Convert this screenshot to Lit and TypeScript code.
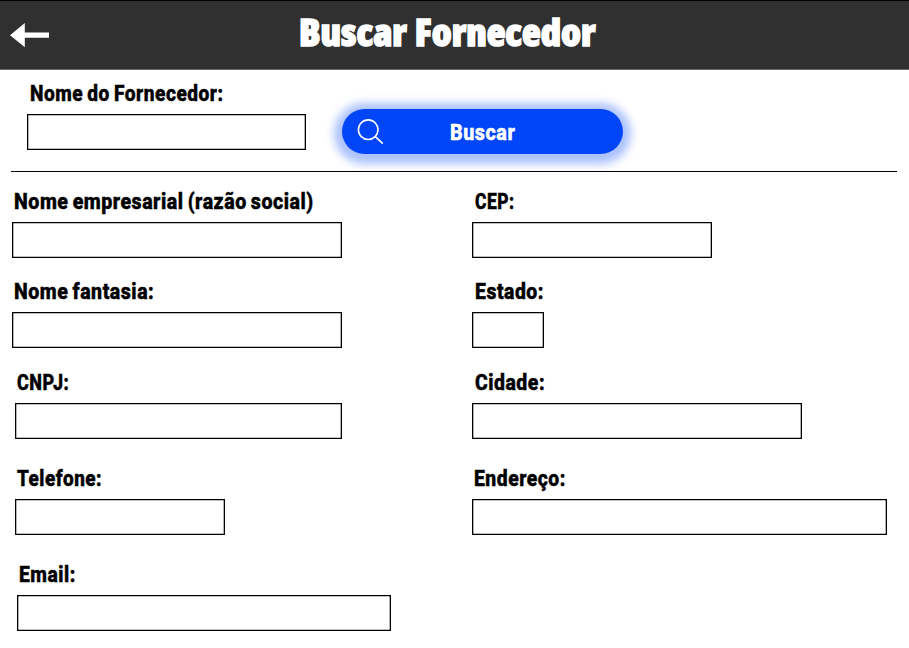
import { LitElement, html, css } from "lit";
import { customElement, property } from "lit/decorators.js";

/** One line of text, condensed horizontally to a given width. */
@customElement("fit-text")
class FitText extends LitElement {
  @property({ type: Number }) width = 100;
  @property() text = "";

  static styles = css`
    :host { display: block; white-space: nowrap; }
    .line { display: inline-block; transform-origin: 0 50%; }
  `;

  render() {
    return html`<span class="line">${this.text}</span>`;
  }

  updated() {
    const line = this.renderRoot.querySelector(".line") as HTMLElement;
    this.style.width = `${this.width}px`;
    line.style.transform = `scaleX(${this.width / line.offsetWidth})`;
  }
}

@customElement("form-field")
class FormField extends LitElement {
  @property() label = "";
  @property({ type: Number }) labelWidth = 100;
  @property({ type: Number }) indent = 2;
  @property({ type: Number }) boxWidth = 100;

  static styles = css`
    :host { display: block; }
    .field { display: flex; flex-direction: column; gap: 9px; }
    .label {
      height: 24px; line-height: 24px; font-size: 22.5px; font-weight: 800; color: #000;
      letter-spacing: 0.6px; word-spacing: -1.4px; -webkit-text-stroke: 0.5px #000;
    }
    .box {
      box-sizing: border-box; height: 36px; margin: 0; padding: 0 8px;
      border: 1px solid #000; border-radius: 0; background: #fff; outline: none;
      box-shadow: inset 0 0 0 0.3px #000; font: 500 18px Roboto, sans-serif;
    }
  `;

  render() {
    return html`<label class="field">
      <fit-text class="label" .text=${this.label} .width=${this.labelWidth}
        style="margin-left:${this.indent}px"></fit-text>
      <input class="box" style="width:${this.boxWidth}px" />
    </label>`;
  }
}

type Field = { label: string; labelWidth: number; indent: number; boxWidth: number; start: number };

const company: Field[] = [
  { label: "Nome empresarial (razão social)", labelWidth: 299.5, indent: 2.4, boxWidth: 330, start: 12 },
  { label: "Nome fantasia:", labelWidth: 140, indent: 2.4, boxWidth: 330, start: 12 },
  { label: "CNPJ:", labelWidth: 52, indent: 2.2, boxWidth: 327, start: 14.5 },
  { label: "Telefone:", labelWidth: 85, indent: 2, boxWidth: 210, start: 14.5 },
  { label: "Email:", labelWidth: 56.5, indent: 2.4, boxWidth: 374, start: 17 },
];

const address: Field[] = [
  { label: "CEP:", labelWidth: 39.5, indent: 3.2, boxWidth: 240, start: 472 },
  { label: "Estado:", labelWidth: 69, indent: 3, boxWidth: 72, start: 472 },
  { label: "Cidade:", labelWidth: 70, indent: 3.2, boxWidth: 330, start: 472 },
  { label: "Endereço:", labelWidth: 92, indent: 2.4, boxWidth: 415, start: 472 },
];

@customElement("app-root")
class AppRoot extends LitElement {
  static styles = css`
    :host {
      display: block; height: 648px; overflow: hidden; background: #fff;
      font-family: Roboto, "Liberation Sans", sans-serif;
    }
    .header {
      box-sizing: border-box; height: 70px; display: flex; align-items: flex-start;
      background: #303030; border-top: 1px solid #000; border-bottom: 1px solid #6a6a6a;
    }
    .back { display: block; margin: 22px 0 0 10px; padding: 0; border: 0; background: none; }
    .icon { display: block; }
    .title {
      margin: 8px 0 0 249px; font-family: "Open Sans", sans-serif; font-size: 37.5px;
      line-height: 46px; font-weight: 800; color: #fff; font-stretch: 75%;
      word-spacing: 1px; -webkit-text-stroke: 1.5px #fff;
    }
    .search {
      box-sizing: border-box; height: 101px; padding: 11px 0 0 27px; display: flex; gap: 35.5px;
    }
    .submit {
      box-sizing: border-box; width: 281.5px; height: 44.5px; margin: 28.3px 0 0; padding: 0 0 0 15px;
      display: flex; align-items: center; border: 0; border-radius: 23px;
      background: #0046f8; color: #fff; box-shadow: 0 2px 9px 8px rgba(0, 70, 248, 0.33);
      font-family: inherit;
    }
    .submit-text {
      margin-left: 65.3px; font-size: 22.5px; line-height: 24px; font-weight: 800;
      letter-spacing: 0.6px; -webkit-text-stroke: 0.5px #fff;
    }
    .rule { height: 1px; margin: 0 12px 0 11px; background: #000; }
    .form {
      margin-top: 17px; display: grid; grid-template-columns: 460px 1fr;
    }
    .column { display: grid; grid-template-rows: 90px 91px 96px 96px 69px; }
  `;

  private column(fields: Field[], origin: number) {
    return html`<div class="column">
      ${fields.map(
        (f) => html`<form-field .label=${f.label} .labelWidth=${f.labelWidth} .indent=${f.indent}
          .boxWidth=${f.boxWidth} style="margin-left:${f.start - origin}px"></form-field>`
      )}
    </div>`;
  }

  render() {
    return html`
      <header class="header">
        <button class="back" aria-label="Voltar">
          <svg class="icon" width="40" height="25" viewBox="0 0 40 25">
            <path d="M0 12.2 14.8 0V9.5H39V14.8H14.8V24.3Z" fill="#fff" />
          </svg>
        </button>
        <fit-text class="title" .text=${"Buscar Fornecedor"} .width=${296.5}></fit-text>
      </header>
      <section class="search">
        <form-field .label=${"Nome do Fornecedor:"} .labelWidth=${194} .indent=${2.6}
          .boxWidth=${279}></form-field>
        <button class="submit">
          <svg class="icon" width="28" height="28" viewBox="0 0 28 28" fill="none"
            stroke="#fff" stroke-width="1.6" stroke-linecap="round">
            <circle cx="11.2" cy="11.7" r="9.8" />
            <path d="M18.3 18.7 25.3 25.2" />
          </svg>
          <fit-text class="submit-text" .text=${"Buscar"} .width=${65}></fit-text>
        </button>
      </section>
      <div class="rule"></div>
      <main class="form">${this.column(company, 0)}${this.column(address, 460)}</main>
    `;
  }
}
